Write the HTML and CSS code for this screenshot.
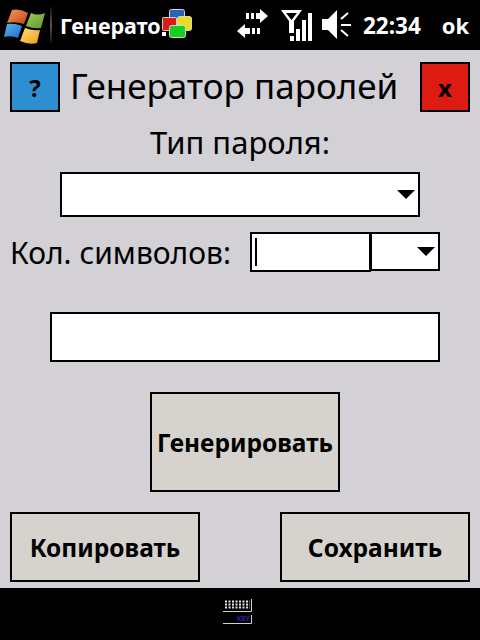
FILE: index.html
```html
<!DOCTYPE html>
<html lang="ru">
<head>
  <meta charset="UTF-8" />
  <meta name="viewport" content="width=device-width, initial-scale=1.0"/>
  <title>Генератор паролей</title>
  <link rel="stylesheet" href="styles.css">
</head>
<body>
  <header class="statusbar">
    <svg class="start-logo" width="42" height="38" viewBox="0 0 42 38">
      <defs>
        <linearGradient id="win-red" x1="0" y1="0" x2="1" y2="1"><stop offset="0" stop-color="#f0a050"/><stop offset="1" stop-color="#c8401c"/></linearGradient>
        <linearGradient id="win-green" x1="0" y1="0" x2="1" y2="1"><stop offset="0" stop-color="#a6c85a"/><stop offset="1" stop-color="#5f9a26"/></linearGradient>
        <linearGradient id="win-blue" x1="0" y1="0" x2="1" y2="1"><stop offset="0" stop-color="#5cb4ec"/><stop offset="1" stop-color="#1c6cc0"/></linearGradient>
        <linearGradient id="win-yellow" x1="0" y1="0" x2="1" y2="1"><stop offset="0" stop-color="#fde070"/><stop offset="1" stop-color="#f09a1c"/></linearGradient>
      </defs>
      <path d="M7 4 Q15 2 23 7 L19 18 Q10 15 2 17 Z" fill="url(#win-red)"/>
      <path d="M26 7 Q33 10 40 7 L36 22 Q29 23 21 20 Z" fill="url(#win-green)"/>
      <path d="M2 18 Q10 17 17 20 L13 32 Q6 29 -1 31 Z" fill="url(#win-blue)"/>
      <path d="M20 22 Q28 25 35 24 L32 37 Q24 39 15 35 Z" fill="url(#win-yellow)"/>
    </svg>
    <span class="divider"></span>
    <span class="app-title">Генерато</span>
    <svg class="tray-app" width="32" height="30" viewBox="0 0 32 30">
      <rect x="1" y="23" width="4" height="4" fill="#fff"/>
      <rect x="8.500" y="0.500" width="15" height="15" rx="2" fill="#2a62b8" stroke="#cfd8d8"/>
      <rect x="1.500" y="8.500" width="14" height="13" rx="1" fill="#d81c14" stroke="#d8d0c8"/>
      <rect x="16.500" y="7.500" width="14" height="14" rx="2" fill="#e8dc20" stroke="#d8d8c0"/>
      <rect x="8.500" y="16.500" width="16" height="12" rx="2" fill="#14d020" stroke="#c8e0c8"/>
    </svg>
    <svg class="tray-icons" width="116" height="36" viewBox="0 0 116 36">
      <g fill="#fff">
        <path d="M9 6h3v6H9zM14 6h3v6h-3zM19 6h4V2l8 7-8 7v-4h-4z"/>
        <path d="M0 24l8-7v4h5v6H8v4zM15 21h3v6h-3zM20 21h3v6h-3z"/>
        <path d="M44 3h21l-8 11v12h-5V14zM49 6l5.500 7 5.500-7z" fill-rule="evenodd"/>
        <rect x="53" y="29" width="4" height="5"/>
        <rect x="59" y="22" width="4" height="12"/>
        <rect x="65" y="13" width="4" height="21"/>
        <rect x="71" y="6" width="4" height="28"/>
        <path d="M85 12h6l9-9v29l-9-9h-6z"/>
      </g>
      <path d="M104 12l7-6M104 18h10M104 23l7 6" stroke="#fff" stroke-width="2" fill="none"/>
    </svg>
    <span class="clock">22:34</span>
    <span class="ok">ok</span>
  </header>

  <main class="form">
    <div class="title-row">
      <button class="tool-btn tool-help">?</button>
      <h1>Генератор паролей</h1>
      <button class="tool-btn tool-close">x</button>
    </div>

    <label class="type-label">Тип пароля:</label>
    <div class="combo combo-type"><span class="arrow"></span></div>

    <div class="count-row">
      <label>Кол. символов:</label>
      <div class="count-input"><span class="caret"></span></div>
      <div class="combo combo-count"><span class="arrow"></span></div>
    </div>

    <div class="result"></div>

    <button class="action action-generate">Генерировать</button>

    <div class="action-row">
      <button class="action">Копировать</button>
      <button class="action">Сохранить</button>
    </div>
  </main>

  <footer class="softbar">
    <svg width="30" height="26" viewBox="0 0 30 26">
      <path d="M2 2.500h25M2 5.500h25M2 8.500h25" stroke="#e8e8e8" stroke-width="2" stroke-dasharray="2 1.500" fill="none"/>
      <path d="M0 12.500h28.500V0M0 24.500h28.500V16" stroke="#d0d0d0" fill="none"/>
      <text x="14" y="22" class="key-text">KEY</text>
    </svg>
  </footer>
</body>
</html>
```

FILE: styles.css
```css
* { box-sizing: border-box; margin: 0; padding: 0; }
html, body {
  width: 480px;
  height: 640px;
  overflow: hidden;
}
body {
  font-family: "Noto Sans", Tahoma, sans-serif;
  background: #d3d1d5;
  color: #000;
  display: flex;
  flex-direction: column;
}

.statusbar {
  height: 50px;
  background: #000;
  color: #fff;
  display: flex;
  align-items: center;
  font-weight: bold;
  position: relative;
}
.start-logo {
  margin-left: 5px;
  flex: none;
  overflow: visible;
}
.divider {
  width: 2px;
  height: 36px;
  margin-left: 3px;
  background: linear-gradient(#111, #555 50%, #111);
}
.app-title {
  margin-left: 8px;
  width: 102px;
  white-space: nowrap;
  font-size: 21.5px;
}
.tray-app {
  position: absolute;
  left: 161px;
  top: 9px;
}
.tray-icons {
  margin-left: 75px;
  flex: none;
}
.clock {
  margin-left: 10px;
  font-size: 22.500px;
}
.ok {
  margin-left: 21px;
  font-size: 22px;
}

.form {
  flex: 1;
  display: flex;
  flex-direction: column;
  padding: 12px 10px 0;
}
.title-row {
  display: flex;
  align-items: center;
  height: 50px;
}
.title-row h1 {
  flex: 1;
  padding: 0 0 3px 10px;
  font-size: 35px;
  font-weight: normal;
  white-space: nowrap;
}
.tool-btn {
  width: 50px;
  height: 50px;
  border: 2px solid #000;
  font-family: inherit;
  font-size: 24px;
  font-weight: bold;
  color: #000;
}
.tool-help { background: #2e8fd0; }
.tool-close { background: #dc1c12; }

.type-label {
  margin-top: 13px;
  text-align: center;
  font-size: 31px;
  line-height: 34px;
}

.combo {
  background: #fff;
  border: 2px solid #000;
  display: flex;
  align-items: center;
  justify-content: flex-end;
}
.arrow {
  width: 0;
  height: 0;
  border-left: 9px solid transparent;
  border-right: 9px solid transparent;
  border-top: 9px solid #000;
  margin-right: 3px;
}
.combo-type {
  width: 360px;
  height: 45px;
  margin: 13px 0 0 50px;
}

.count-row {
  display: flex;
  align-items: flex-start;
  margin-top: 15px;
  height: 40px;
}
.count-row label {
  width: 240px;
  font-size: 30px;
  line-height: 41px;
  white-space: nowrap;
}
.count-input {
  width: 121px;
  height: 40px;
  background: #fff;
  border: 2px solid #000;
  padding: 4px 3px;
}
.caret {
  display: block;
  width: 2px;
  height: 28px;
  background: #000;
}
.combo-count {
  width: 70px;
  height: 39px;
  margin-left: -1px;
}

.result {
  width: 390px;
  height: 50px;
  margin: 40px 0 0 40px;
  background: #fff;
  border: 2px solid #000;
}

.action {
  width: 190px;
  height: 70px;
  background: #d6d3ce;
  border: 2px solid #000;
  font-family: inherit;
  font-size: 24.500px;
  font-weight: bold;
  color: #000;
}
.action-generate {
  height: 100px;
  margin: 30px 0 0 140px;
}
.action-row {
  display: flex;
  justify-content: space-between;
  margin-top: 20px;
}

.softbar {
  height: 52px;
  background: #000;
  display: flex;
  justify-content: center;
  padding: 11px 4px 0 0;
}
.key-text {
  fill: #2020b0;
  font-size: 7px;
  font-weight: bold;
}
```
